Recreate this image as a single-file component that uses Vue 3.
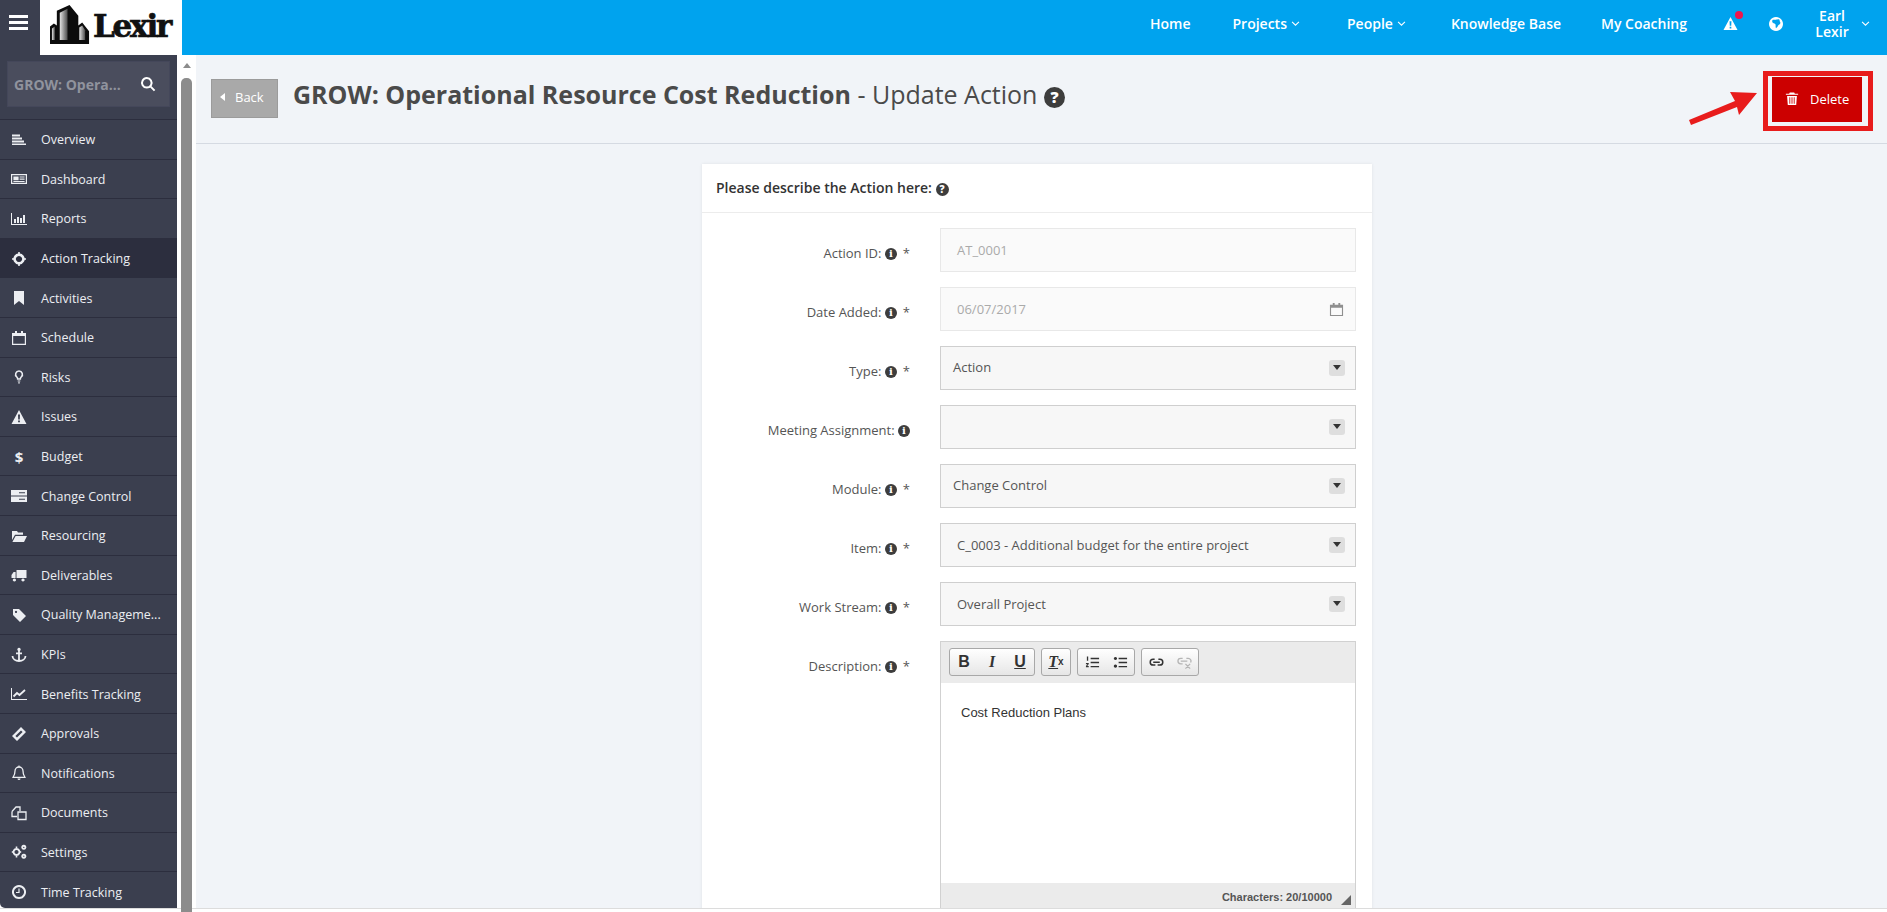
<template>
  <div class="app">
    <header class="topbar">
      <button class="burger"><span></span><span></span><span></span></button>
      <div class="logo">
        <svg class="logo-mark" viewBox="0 0 42 42">
          <defs>
            <linearGradient id="steel" x1="0" y1="0" x2="1" y2="0">
              <stop offset="0" stop-color="#e4e4e4" />
              <stop offset="1" stop-color="#4c4c4c" />
            </linearGradient>
          </defs>
          <path d="M0 42V24l4-3 3 2V8l13-6 9 11v10l4-3 7 9v13z" fill="#0c0c0c" />
          <path d="M10 38V10l8-4v32z" fill="url(#steel)" />
          <path d="M2 38V26l3-2v14z" fill="url(#steel)" />
          <path d="M30 38V25l3-2 3 5v10z" fill="url(#steel)" />
        </svg>
        <span class="logo-text">Lexir</span>
      </div>
      <nav class="topnav">
        <a class="nav-home">Home</a>
        <a class="nav-projects">Projects <Icon name="chevron" class="chev" /></a>
        <a class="nav-people">People <Icon name="chevron" class="chev" /></a>
        <a class="nav-kb">Knowledge Base</a>
        <a class="nav-coach">My Coaching</a>
        <span class="nav-alert"><Icon name="warning" class="alert-ico" /><i class="dot"></i></span>
        <span class="nav-globe"><Icon name="globe" class="globe-ico" /></span>
        <span class="nav-user">Earl<br />Lexir</span>
        <Icon name="chevron" class="chev user-chev" />
      </nav>
    </header>

    <div class="body">
      <aside class="sidebar">
        <div class="search-wrap">
          <div class="search">
            <span class="search-text">GROW: Opera...</span>
            <Icon name="search" class="search-ico" />
          </div>
        </div>
        <ul class="menu">
          <li v-for="item in menu" :key="item.label" :class="{ active: item.active }">
            <span class="menu-icon">
              <b v-if="item.glyph" class="glyph">{{ item.glyph }}</b>
              <Icon v-else :name="item.icon" class="menu-svg" />
            </span>
            <span class="menu-label">{{ item.label }}</span>
          </li>
        </ul>
      </aside>

      <div class="scrollstrip">
        <i class="scroll-up"></i>
        <i class="scroll-thumb"></i>
      </div>

      <main class="main">
        <div class="page-head">
          <button class="back"><i class="back-caret"></i>Back</button>
          <h1 class="title"><b>GROW: Operational Resource Cost Reduction</b> - Update Action <span class="help big">?</span></h1>
          <div class="delete-wrap">
            <button class="delete"><Icon name="trash" class="trash" />Delete</button>
            <i class="annot-box"></i>
          </div>
        </div>

        <div class="content">
          <section class="card">
            <div class="card-head">Please describe the Action here: <span class="help">?</span></div>
            <div class="form">
              <div v-for="f in fields" :key="f.label" class="row">
                <label class="lbl">{{ f.label }} <span class="info">i</span><span v-if="f.req" class="req">*</span></label>
                <div class="field" :class="[f.kind, f.indent ? 'indent' : '']">
                  <span>{{ f.value }}</span>
                  <Icon v-if="f.kind === 'date'" name="calendar" class="cal" />
                  <i v-if="f.kind === 'select'" class="caret"></i>
                </div>
              </div>

              <div class="row">
                <label class="lbl">Description: <span class="info">i</span><span class="req">*</span></label>
                <div class="editor">
                  <div class="toolbar">
                    <div class="tgroup">
                      <span class="tbtn bold">B</span>
                      <span class="tbtn ital">I</span>
                      <span class="tbtn under">U</span>
                    </div>
                    <div class="tgroup">
                      <span class="tbtn clear"><u>T</u><sub>x</sub></span>
                    </div>
                    <div class="tgroup">
                      <span class="tbtn"><Icon name="ol" class="tico" /></span>
                      <span class="tbtn"><Icon name="ul" class="tico" /></span>
                    </div>
                    <div class="tgroup">
                      <span class="tbtn"><Icon name="link" class="tico" /></span>
                      <span class="tbtn off"><Icon name="unlink" class="tico" /></span>
                    </div>
                  </div>
                  <div class="editor-text">Cost Reduction Plans</div>
                  <div class="editor-foot">
                    <span>Characters: 20/10000</span>
                    <i class="resize"></i>
                  </div>
                </div>
              </div>
            </div>
          </section>
        </div>
      </main>
    </div>
    <div class="bottom-edge"></div>

    <svg class="annot-arrow" viewBox="0 0 80 40">
      <polygon points="1,29 47,10 42,1 69,2 51,24 49,16 3,34" fill="#e81c1c" />
    </svg>
  </div>
</template>

<script setup>
import { h } from 'vue'

// hand drawn icons on a 16x16 grid, f = filled path, s = stroked path
const icons = {
  overview: { f: 'M1 2.5h8v2H1zM1 5.5h10v2H1zM1 8.5h12v2H1zM1 11.5h14v1.5H1z' },
  dashboard: { f: 'M0 3h16v10H0zM1.2 4.2v7.6h13.6V4.2zM2.4 5.4h5.2v3.8H2.4zM8.6 5.4h5v1.2h-5zM8.6 7.6h5v1.2h-5zM2.4 10h11.2v.9H2.4z' },
  reports: { f: 'M0 2h1v11h15v1H0zM3 8h2v4H3zM6 6h2v6H6zM9 7h2v5H9zM12 4h2v8h-2z' },
  action: { s: 'M8 3.6a4.4 4.4 0 1 0 .01 0z', w: 2.6, f: 'M7.2 1h1.6v3H7.2zM7.2 12h1.6v3H7.2zM1 7.2h3v1.6H1zM12 7.2h3v1.6h-3z' },
  bookmark: { f: 'M3 1h10v14l-5-4-5 4z' },
  calendar: { f: 'M1 3h14v12H1zM2.2 6v7.8h11.6V6zM4 1h2v2H4zM10 1h2v2h-2z' },
  risks: { s: 'M8 2a3.4 3.4 0 0 0-2.2 6c.6.6.9 1.2.9 2h2.6c0-.8.3-1.4.9-2A3.4 3.4 0 0 0 8 2z', w: 1.6, f: 'M6.7 11.6h2.6v1H6.7zM7.2 13.2h1.6v1.4H7.2z' },
  warning: { f: 'M8 1l7.5 14H.5zM7 5.5h2l-.2 5H7.2zM7.1 11.5h1.8v1.8H7.1z' },
  change: { f: 'M0 2h16v5.4H0zM0 8.6h16V14H0zM8 4.2h6v1H8zM8 10.8h6v1H8z' },
  folder: { f: 'M1 3h5l1 1.5h5V6.8H4L1 12zM4.6 8H16l-3 6H1.4z' },
  truck: { f: 'M5.5 3h10v8h-10zM4.6 5H2.6L.5 8v3h4.1zM3.4 11.4a1.6 1.6 0 1 0 .01 0zM12 11.4a1.6 1.6 0 1 0 .01 0z' },
  tag: { f: 'M2 2h6l7 7-6 6-7-7zM5 3.8a1.1 1.1 0 1 0 .01 0z' },
  anchor: { f: 'M8 .8a1.7 1.7 0 1 0 .01 0z', s: 'M8 4v10M5 6.4h6M1.5 9c0 3 3 5 6.5 5s6.5-2 6.5-5', w: 1.8 },
  chart: { f: 'M0 2h1v11h15v1H0z', s: 'M2.5 10.5L6 7l2.5 2L14 4', w: 1.8 },
  ticket: { f: 'M10 1l5 5-9 9-5-5zM10 4.4L4.4 10 6 11.6 11.6 6z' },
  bell: { s: 'M8 2a4 4 0 0 0-4 4c0 4-1.5 5-2 6.4h12c-.5-1.4-2-2.4-2-6.4a4 4 0 0 0-4-4z', w: 1.3, f: 'M6.5 13.6h3a1.5 1.5 0 0 1-3 0zM7.4.6h1.2v1.6H7.4z' },
  files: { s: 'M1 6.5L5 2h4v4M1 6.5v5h5M7 7h8v7.5H7z', w: 1.3 },
  cogs: { s: 'M5.5 5a3 3 0 1 0 .01 0zM12.8 1.7a1.6 1.6 0 1 0 .01 0zM12.8 10.6a1.6 1.6 0 1 0 .01 0z', w: 1.9, f: 'M4.7 2.5h1.6V4H4.7zM4.7 12h1.6v1.5H4.7zM.8 7.2h1.6v1.6H.8zM8.6 7.2h1.6v1.6H8.6z' },
  clock: { s: 'M8 2a6 6 0 1 0 .01 0z', w: 2, f: 'M7.4 4.5h1.2v4.6H5V8h2.4z' },
  search: { s: 'M6.8 2a4.8 4.8 0 1 0 .01 0zM10.4 10.4L14.6 14.6', w: 2 },
  chevron: { s: 'M3 5.5L8 10.5l5-5', w: 1.5 },
  globe: { f: 'M8 1a7 7 0 1 0 .01 0zM4.5 4c1.5-1 2.5.5 4-.5l2.5-.3c1 1 .5 2.5 1.5 3.5-.5 2-2.5 2-3 4l-1.5 1.5C7 10 8.5 8.5 6.5 7.5 5 7.5 3.5 6 4.5 4z' },
  trash: { f: 'M5.5 1h5l.8 1.6H15v1.2H1V2.6h3.7zM2.4 5h11.2l-.8 10.4H3.2zM5 6.5v7.5h1V6.5zM7.5 6.5v7.5h1V6.5zM10 6.5v7.5h1V6.5z' },
  ol: { f: 'M6 3h9v1.4H6zM6 7.3h9v1.4H6zM6 11.6h9V13H6zM2 1.5h1.4V6H2zM1 8.5h3v1.2L2.4 11.6H4V13H1v-1.2l1.6-2H1z' },
  ul: { f: 'M6 3h9v1.4H6zM6 7.3h9v1.4H6zM6 11.6h9V13H6zM2.6 2a1.7 1.7 0 1 0 .01 0zM2.6 10.2a1.7 1.7 0 1 0 .01 0z' },
  link: { s: 'M6 4.5H4.4a3.1 3.1 0 0 0 0 6.2h2.4M10 4.5h1.6a3.1 3.1 0 0 1 0 6.2H9.2M4.5 7.6h7', w: 1.6 },
  unlink: { s: 'M6 3.5H4a3 3 0 0 0 0 6h2M10 3.5h2a3 3 0 0 1 2.5 4.5M4 6.5h7M9 9.5l5 5M14 9.5l-5 5', w: 1.4 }
}

const Icon = (props) => {
  const p = icons[props.name]
  const kids = []
  if (p.f) kids.push(h('path', { d: p.f, fill: 'currentColor', 'fill-rule': 'evenodd' }))
  if (p.s) kids.push(h('path', { d: p.s, fill: 'none', stroke: 'currentColor', 'stroke-width': p.w }))
  return h('svg', { viewBox: '0 0 16 16' }, kids)
}
Icon.props = ['name']

const menu = [
  { label: 'Overview', icon: 'overview' },
  { label: 'Dashboard', icon: 'dashboard' },
  { label: 'Reports', icon: 'reports' },
  { label: 'Action Tracking', icon: 'action', active: true },
  { label: 'Activities', icon: 'bookmark' },
  { label: 'Schedule', icon: 'calendar' },
  { label: 'Risks', icon: 'risks' },
  { label: 'Issues', icon: 'warning' },
  { label: 'Budget', glyph: '$' },
  { label: 'Change Control', icon: 'change' },
  { label: 'Resourcing', icon: 'folder' },
  { label: 'Deliverables', icon: 'truck' },
  { label: 'Quality Manageme...', icon: 'tag' },
  { label: 'KPIs', icon: 'anchor' },
  { label: 'Benefits Tracking', icon: 'chart' },
  { label: 'Approvals', icon: 'ticket' },
  { label: 'Notifications', icon: 'bell' },
  { label: 'Documents', icon: 'files' },
  { label: 'Settings', icon: 'cogs' },
  { label: 'Time Tracking', icon: 'clock' }
]

const fields = [
  { label: 'Action ID:', req: true, value: 'AT_0001', kind: 'disabled', indent: true },
  { label: 'Date Added:', req: true, value: '06/07/2017', kind: 'date', indent: true },
  { label: 'Type:', req: true, value: 'Action', kind: 'select' },
  { label: 'Meeting Assignment:', req: false, value: '', kind: 'select' },
  { label: 'Module:', req: true, value: 'Change Control', kind: 'select' },
  { label: 'Item:', req: true, value: 'C_0003 - Additional budget for the entire project', kind: 'select', indent: true },
  { label: 'Work Stream:', req: true, value: 'Overall Project', kind: 'select', indent: true }
]
</script>

<style>
html, body {
  margin: 0;
  height: 100%;
  overflow: hidden;
  background: #fff;
}
</style>

<style scoped>
.app {
  position: relative;
  height: 912px;
  overflow: hidden;
  font-family: "Open Sans", "Noto Sans", sans-serif;
  color: #555;
  display: flex;
  flex-direction: column;
}

/* top bar */
.topbar {
  display: flex;
  height: 55px;
  flex: none;
  background: #00a3ee;
}
.burger {
  width: 40px;
  background: #3b3f4f;
  border: none;
  padding: 15px 12px 0 9px;
  display: flex;
  flex-direction: column;
  gap: 3px;
}
.burger span {
  display: block;
  height: 3px;
  width: 19px;
  background: #fff;
}
.logo {
  width: 142px;
  background: #fff;
  display: flex;
  align-items: flex-start;
  padding: 3px 0 0 10px;
  box-sizing: border-box;
}
.logo-mark {
  width: 41px;
  height: 41px;
  flex: none;
}
.logo-text {
  font-family: "DejaVu Serif", serif;
  font-weight: 700;
  font-size: 31px;
  line-height: 42px;
  letter-spacing: -2.2px;
  color: #111;
  margin-left: 2px;
  margin-top: 2px;
  -webkit-text-stroke: 0.7px #111;
}
.topnav {
  flex: 1;
  display: flex;
  align-items: center;
  color: #fff;
  font-size: 14px;
  font-weight: 600;
  padding: 0 0 8px 968px;
}
.topnav a {
  display: inline-flex;
  align-items: center;
  gap: 3px;
  white-space: nowrap;
}
.nav-projects { margin-left: 42px; }
.nav-people { margin-left: 46px; }
.nav-kb { margin-left: 44px; }
.nav-coach { margin-left: 40px; }
.chev {
  width: 11px;
  height: 11px;
}
.nav-alert {
  position: relative;
  margin-left: 36px;
  display: flex;
}
.alert-ico {
  width: 15px;
  height: 15px;
}
.dot {
  position: absolute;
  top: -5px;
  right: -5px;
  width: 8px;
  height: 8px;
  border-radius: 50%;
  background: #f0144b;
}
.nav-globe {
  margin-left: 30px;
  display: flex;
}
.globe-ico {
  width: 16px;
  height: 16px;
}
.nav-user {
  margin-left: 26px;
  width: 44px;
  text-align: center;
  line-height: 16px;
}
.user-chev {
  margin-left: 6px;
}

/* body */
.body {
  flex: 1;
  display: flex;
  min-height: 0;
}
.sidebar {
  width: 177px;
  flex: none;
  background: #3b3f4f;
  color: #eceef2;
  overflow: hidden;
  border-bottom-left-radius: 5px;
}
.search-wrap {
  height: 65px;
  padding: 6px 7px 0;
  box-sizing: border-box;
  border-bottom: 1px solid #2c2e3e;
}
.search {
  height: 46px;
  background: #4a4d5d;
  border: 1px solid #44475a;
  box-sizing: border-box;
  display: flex;
  align-items: center;
  justify-content: space-between;
  padding: 0 13px 0 6px;
}
.search-text {
  color: #90939d;
  font-weight: 700;
  font-size: 14px;
}
.search-ico {
  width: 16px;
  height: 16px;
  color: #fff;
}
.menu {
  list-style: none;
  margin: 0;
  padding: 0;
}
.menu li {
  height: 39.6px;
  box-sizing: border-box;
  border-bottom: 1px solid #2c2e3e;
  display: flex;
  align-items: center;
  padding: 1px 0 0 11px;
  font-size: 12.5px;
  white-space: nowrap;
}
.menu li.active {
  background: #2c2e3e;
}
.menu-icon {
  width: 30px;
  flex: none;
  display: flex;
  align-items: center;
}
.menu-svg {
  width: 16px;
  height: 16px;
}
.glyph {
  width: 16px;
  text-align: center;
  font-size: 15px;
}
.scrollstrip {
  position: relative;
  width: 19px;
  flex: none;
  background: #fff;
  padding: 8px 4px 0;
  box-sizing: border-box;
}
.scroll-up {
  display: block;
  width: 0;
  margin: 0 auto;
  border: 4px solid transparent;
  border-top: none;
  border-bottom: 5px solid #8c8c8c;
}
.scroll-thumb {
  display: block;
  width: 11px;
  height: 900px;
  margin-top: 10px;
  background: #8c8c8c;
  border-radius: 5px 5px 0 0;
}
.main {
  flex: 1;
  min-width: 0;
  background: #f1f4f8;
  overflow: hidden;
}

/* page heading */
.page-head {
  height: 89px;
  box-sizing: border-box;
  border-bottom: 1px solid #d5dae2;
  display: flex;
  align-items: flex-start;
  padding: 24px 25px 0 15px;
}
.back {
  width: 67px;
  height: 39px;
  background: #a9a9a9;
  border: 1px solid #9b9b9b;
  color: #fff;
  font-family: inherit;
  font-size: 13px;
  display: flex;
  align-items: center;
  padding: 0 0 3px 8px;
  flex: none;
}
.back-caret {
  border: 4px solid transparent;
  border-left: none;
  border-right: 5px solid #fff;
  margin-right: 10px;
}
.title {
  margin: -1px 0 0 15px;
  font-size: 25px;
  font-weight: 400;
  line-height: 33px;
  color: #4a4a4a;
  white-space: nowrap;
}
.title b {
  font-weight: 700;
}
.help {
  display: inline-flex;
  align-items: center;
  justify-content: center;
  width: 13px;
  height: 13px;
  border-radius: 50%;
  background: #3d3d3d;
  color: #fff;
  font-size: 10px;
  font-weight: 800;
  line-height: 1;
  vertical-align: 0;
}
.help.big {
  width: 21px;
  height: 21px;
  font-size: 16px;
  vertical-align: 1px;
}
.delete-wrap {
  position: relative;
  margin: -2px 0 0 auto;
}
.delete {
  width: 90px;
  height: 45px;
  background: #cc0000;
  border: none;
  color: #fff;
  font-family: inherit;
  font-size: 13px;
  display: flex;
  align-items: center;
  padding: 0 0 2px 13px;
}
.trash {
  width: 14px;
  height: 15px;
  margin-right: 11px;
}
.annot-box {
  position: absolute;
  top: -6px;
  left: -9px;
  right: -11px;
  bottom: -9px;
  border: 5px solid #e81c1c;
}
.annot-arrow {
  position: absolute;
  left: 1688px;
  top: 91px;
  width: 80px;
  height: 40px;
}

/* form card */
.content {
  display: flex;
  justify-content: center;
  padding: 20px 9px 0 0;
}
.card {
  width: 670px;
  background: #fff;
  box-shadow: 0 0 3px rgba(0, 0, 0, 0.08);
}
.card-head {
  height: 49px;
  box-sizing: border-box;
  border-bottom: 1px solid #ececec;
  padding: 14px 0 0 14px;
  font-size: 14px;
  font-weight: 600;
  line-height: 20px;
  color: #333;
}
.form {
  padding: 15px 16px 0 0;
}
.row {
  display: flex;
  margin-bottom: 15px;
}
.lbl {
  width: 208px;
  flex: none;
  text-align: right;
  font-size: 13px;
  line-height: 18px;
  padding-top: 16px;
  margin-right: 30px;
  color: #555;
  white-space: nowrap;
}
.info {
  display: inline-flex;
  align-items: center;
  justify-content: center;
  width: 12px;
  height: 12px;
  border-radius: 50%;
  background: #3d3d3d;
  color: #fff;
  font-size: 10px;
  font-weight: 800;
  line-height: 1;
  font-family: "DejaVu Serif", serif;
  vertical-align: 1px;
}
.req {
  margin-left: 6px;
  font-size: 13px;
}
.field {
  flex: 1;
  height: 44px;
  box-sizing: border-box;
  display: flex;
  align-items: center;
  justify-content: space-between;
  font-size: 13px;
  padding: 0 16px 0 12px;
  border: 1px solid #cfcfcf;
  background: #f7f7f7;
  color: #555;
}
.field.indent {
  padding-left: 16px;
}
.field.disabled,
.field.date {
  background: #fafafa;
  border-color: #e8e8e8;
  color: #aaa;
}
.field > span {
  position: relative;
  top: -1px;
}
.field.indent > span {
  top: 0;
}
.cal {
  width: 15px;
  height: 15px;
  color: #8f8f8f;
  margin-right: -5px;
}
.caret {
  width: 16px;
  height: 16px;
  background: #dedede;
  border-radius: 3px;
  position: relative;
  margin-right: -6px;
  flex: none;
}
.caret::after {
  content: "";
  position: absolute;
  left: 4px;
  top: 5px;
  border: 4px solid transparent;
  border-bottom: none;
  border-top: 5px solid #333;
}

/* rich text editor */
.editor {
  flex: 1;
  border: 1px solid #d1d1d1;
  border-bottom: none;
  box-sizing: border-box;
  font-family: "Liberation Sans", Arial, sans-serif;
}
.toolbar {
  height: 41px;
  box-sizing: border-box;
  background: #ebebeb;
  display: flex;
  gap: 6px;
  padding: 6px 0 0 8px;
}
.tgroup {
  display: flex;
  height: 28px;
  box-sizing: border-box;
  border: 1px solid #a8a8a8;
  border-radius: 3px;
  background: linear-gradient(#fff, #e6e6e6);
}
.tbtn {
  width: 28px;
  display: flex;
  align-items: center;
  justify-content: center;
  color: #333;
  font-size: 16px;
}
.bold {
  font-weight: 700;
}
.ital {
  font-family: "Liberation Serif", serif;
  font-style: italic;
  font-weight: 700;
}
.under {
  font-weight: 700;
  text-decoration: underline;
}
.clear {
  font-family: "Liberation Serif", serif;
  font-style: italic;
  font-weight: 700;
}
.clear sub {
  font-family: "Liberation Sans", sans-serif;
  font-style: normal;
  font-size: 10px;
  line-height: 0;
}
.tico {
  width: 15px;
  height: 15px;
}
.off {
  color: #b5b5b5;
}
.editor-text {
  height: 200px;
  box-sizing: border-box;
  background: #fff;
  padding: 22px 0 0 20px;
  font-size: 13px;
  line-height: 16px;
  color: #333;
}
.editor-foot {
  height: 30px;
  box-sizing: border-box;
  background: #ebebeb;
  display: flex;
  justify-content: flex-end;
  padding: 7px 0 0 0;
  font-size: 11px;
  font-weight: 700;
  color: #555;
  line-height: 14px;
  position: relative;
}
.editor-foot span {
  margin-right: 23px;
}
.resize {
  position: absolute;
  right: 4px;
  top: 12px;
  border-left: 10px solid transparent;
  border-bottom: 10px solid #666;
}

.bottom-edge {
  height: 4px;
  flex: none;
  background: #fff;
  border-top: 1px solid #dcdcdc;
  box-sizing: border-box;
}
</style>
